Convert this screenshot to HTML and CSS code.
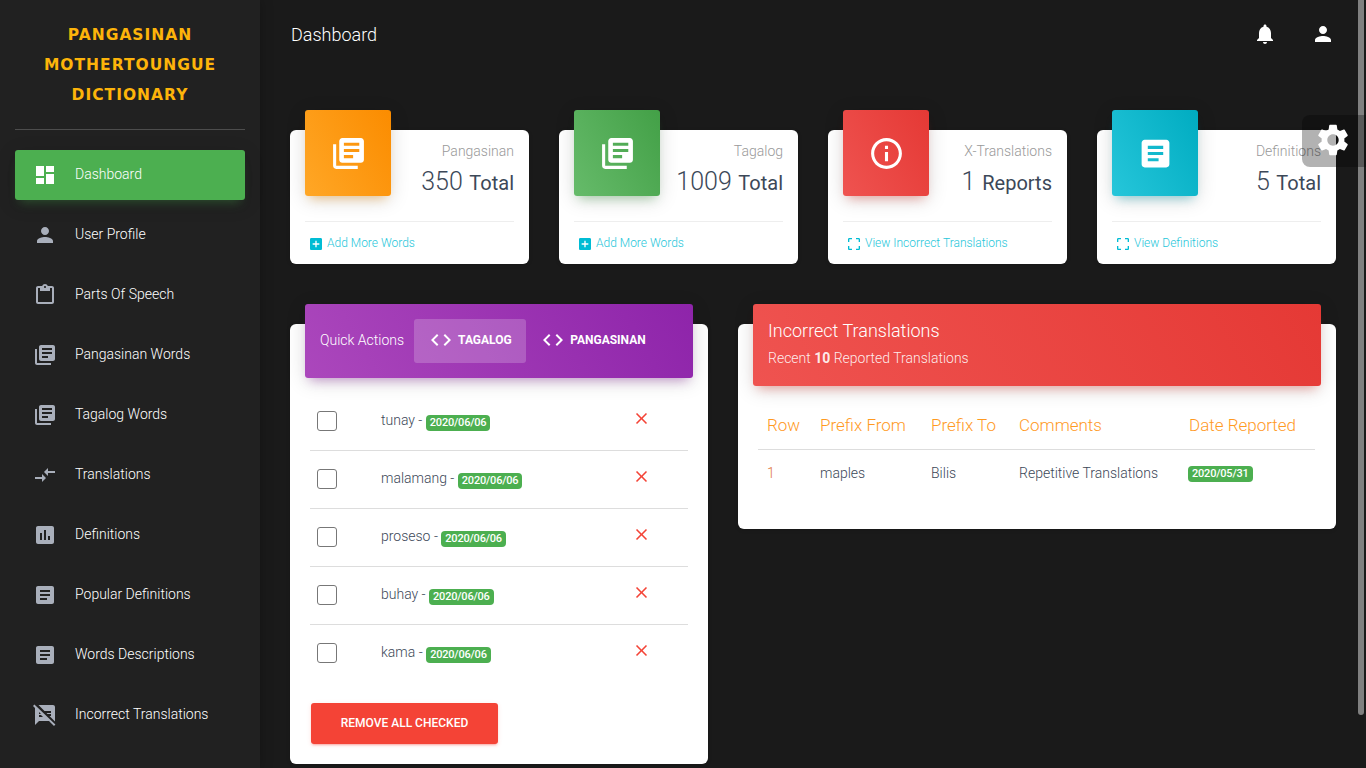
FILE: index.html
```html
<!DOCTYPE html>
<html lang="en">
<head>
<meta charset="utf-8">
<title>Dashboard</title>
<link rel="stylesheet" href="styles.css">
</head>
<body>
<svg class="defs" width="0" height="0" aria-hidden="true">
  <symbol id="i-dash" viewBox="0 0 24 24"><path d="M3 13h8V3H3v10zm0 8h8v-6H3v6zm10 0h8V11h-8v10zm0-18v6h8V3h-8z"/></symbol>
  <symbol id="i-person" viewBox="0 0 24 24"><path d="M12 12c2.21 0 4-1.79 4-4s-1.79-4-4-4-4 1.79-4 4 1.79 4 4 4zm0 2c-2.67 0-8 1.34-8 4v2h16v-2c0-2.66-5.33-4-8-4z"/></symbol>
  <symbol id="i-clip" viewBox="0 0 24 24"><path d="M19 3h-4.18C14.4 1.84 13.3 1 12 1c-1.3 0-2.4.84-2.82 2H5c-1.1 0-2 .9-2 2v14c0 1.1.9 2 2 2h14c1.1 0 2-.9 2-2V5c0-1.1-.9-2-2-2zm-7 0c.55 0 1 .45 1 1s-.45 1-1 1-1-.45-1-1 .45-1 1-1zm7 16H5V5h2v3h10V5h2v14z"/></symbol>
  <symbol id="i-lib" viewBox="0 0 24 24"><path d="M4 6H2v14c0 1.1.9 2 2 2h14v-2H4V6zm16-4H8c-1.1 0-2 .9-2 2v12c0 1.1.9 2 2 2h12c1.1 0 2-.9 2-2V4c0-1.1-.9-2-2-2zm-1 9H9V9h10v2zm-4 4H9v-2h6v2zm4-8H9V5h10v2z"/></symbol>
  <symbol id="i-compare" viewBox="0 0 24 24"><path d="M9.01 14H2v2h7.01v3L13 15l-3.99-4v3zm5.98-1v-3H22V8h-7.01V5L11 9l3.99 4z"/></symbol>
  <symbol id="i-chart" viewBox="0 0 24 24"><path d="M19 3H5c-1.1 0-2 .9-2 2v14c0 1.1.9 2 2 2h14c1.1 0 2-.9 2-2V5c0-1.1-.9-2-2-2zM9 17H7v-7h2v7zm4 0h-2V7h2v10zm4 0h-2v-4h2v4z"/></symbol>
  <symbol id="i-article" viewBox="0 0 24 24"><path d="M19 3H5c-1.1 0-2 .9-2 2v14c0 1.1.9 2 2 2h14c1.1 0 2-.9 2-2V5c0-1.1-.9-2-2-2zm-5 14H7v-2h7v2zm3-4H7v-2h10v2zm0-4H7V7h10v2z"/></symbol>
  <symbol id="i-speaker-off" viewBox="0 0 24 24"><path d="M21.99 4c0-1.1-.89-2-1.99-2H5.5l6 6H18v2h-4.5l1 1H18v2h-1.5l5.5 5.5V4zM1.4 1.6 0 3l2 2v17l4-4h10l5 5 1.4-1.4L1.4 1.6zM6 14v-2h2l2 2H6zm0-3V9l2 2H6z"/></symbol>
  <symbol id="i-info" viewBox="0 0 24 24"><path d="M11 7h2v2h-2zm0 4h2v6h-2zm1-9C6.48 2 2 6.48 2 12s4.48 10 10 10 10-4.48 10-10S17.52 2 12 2zm0 18c-4.41 0-8-3.59-8-8s3.59-8 8-8 8 3.59 8 8-3.59 8-8 8z"/></symbol>
  <symbol id="i-addbox" viewBox="0 0 24 24"><path d="M19 3H5a2 2 0 0 0-2 2v14c0 1.1.9 2 2 2h14c1.1 0 2-.9 2-2V5c0-1.1-.9-2-2-2zm-2 10h-4v4h-2v-4H7v-2h4V7h2v4h4v2z"/></symbol>
  <symbol id="i-full" viewBox="0 0 24 24"><path d="M3 5v4h2V5h4V3H5c-1.1 0-2 .9-2 2zm2 10H3v4c0 1.1.9 2 2 2h4v-2H5v-4zm14 4h-4v2h4c1.1 0 2-.9 2-2v-4h-2v4zm0-16h-4v2h4v4h2V5c0-1.1-.9-2-2-2z"/></symbol>
  <symbol id="i-code" viewBox="0 0 24 24"><path d="M9.4 16.6 4.8 12l4.6-4.6L8 6l-6 6 6 6 1.4-1.4zm5.2 0 4.6-4.6-4.6-4.6L16 6l6 6-6 6-1.4-1.4z"/></symbol>
  <symbol id="i-close" viewBox="0 0 24 24"><path d="M19 6.41 17.59 5 12 10.59 6.41 5 5 6.41 10.59 12 5 17.59 6.41 19 12 13.41 17.59 19 19 17.59 13.41 12z"/></symbol>
  <symbol id="i-bell" viewBox="0 0 24 24"><path d="M12 22c1.1 0 2-.9 2-2h-4c0 1.1.9 2 2 2zm6-6v-5c0-3.07-1.63-5.64-4.5-6.32V4c0-.83-.67-1.5-1.5-1.5s-1.5.67-1.5 1.5v.68C7.64 5.36 6 7.92 6 11v5l-2 2v1h16v-1l-2-2z"/></symbol>
  <symbol id="i-gear" viewBox="0 0 24 24"><path d="M19.14 12.94c.04-.3.06-.61.06-.94 0-.32-.02-.64-.07-.94l2.03-1.58a.49.49 0 0 0 .12-.61l-1.92-3.32a.488.488 0 0 0-.59-.22l-2.39.96c-.5-.38-1.03-.7-1.62-.94l-.36-2.54a.484.484 0 0 0-.48-.41h-3.84c-.24 0-.43.17-.47.41l-.36 2.54c-.59.24-1.13.57-1.62.94l-2.39-.96c-.22-.08-.47 0-.59.22L2.74 8.87c-.12.21-.08.47.12.61l2.03 1.58c-.05.3-.09.63-.09.94s.02.64.07.94l-2.03 1.58a.49.49 0 0 0-.12.61l1.92 3.32c.12.22.37.29.59.22l2.39-.96c.5.38 1.03.7 1.62.94l.36 2.54c.05.24.24.41.48.41h3.84c.24 0 .44-.17.47-.41l.36-2.54c.59-.24 1.13-.56 1.62-.94l2.39.96c.22.08.47 0 .59-.22l1.92-3.32c.12-.22.07-.47-.12-.61l-2.01-1.58zM12 15.6c-1.98 0-3.6-1.62-3.6-3.6s1.62-3.6 3.6-3.6 3.6 1.62 3.6 3.6-1.62 3.6-3.6 3.6z"/></symbol>
</svg>

<div class="layout">
  <aside class="sidebar">
    <div class="brand">PANGASINAN<br>MOTHERTOUNGUE<br>DICTIONARY</div>
    <nav class="nav">
      <a class="nav-item active"><svg class="nav-icon"><use href="#i-dash"/></svg><span>Dashboard</span></a>
      <a class="nav-item"><svg class="nav-icon"><use href="#i-person"/></svg><span>User Profile</span></a>
      <a class="nav-item"><svg class="nav-icon"><use href="#i-clip"/></svg><span>Parts Of Speech</span></a>
      <a class="nav-item"><svg class="nav-icon"><use href="#i-lib"/></svg><span>Pangasinan Words</span></a>
      <a class="nav-item"><svg class="nav-icon"><use href="#i-lib"/></svg><span>Tagalog Words</span></a>
      <a class="nav-item"><svg class="nav-icon"><use href="#i-compare"/></svg><span>Translations</span></a>
      <a class="nav-item"><svg class="nav-icon"><use href="#i-chart"/></svg><span>Definitions</span></a>
      <a class="nav-item"><svg class="nav-icon"><use href="#i-article"/></svg><span>Popular Definitions</span></a>
      <a class="nav-item"><svg class="nav-icon"><use href="#i-article"/></svg><span>Words Descriptions</span></a>
      <a class="nav-item"><svg class="nav-icon"><use href="#i-speaker-off"/></svg><span>Incorrect Translations</span></a>
    </nav>
  </aside>

  <main class="main">
    <header class="topbar">
      <div class="page-title">Dashboard</div>
      <div class="top-actions">
        <svg class="top-icon"><use href="#i-bell"/></svg>
        <svg class="top-icon"><use href="#i-person"/></svg>
      </div>
    </header>

    <section class="stats">
      <article class="stat">
        <div class="stat-head">
          <div class="stat-icon orange"><svg><use href="#i-lib"/></svg></div>
          <div class="stat-text"><p class="stat-cat">Pangasinan</p><h3 class="stat-val"><small>350</small> Total</h3></div>
        </div>
        <div class="stat-foot"><svg class="foot-icon"><use href="#i-addbox"/></svg><a>Add More Words</a></div>
      </article>
      <article class="stat">
        <div class="stat-head">
          <div class="stat-icon green"><svg><use href="#i-lib"/></svg></div>
          <div class="stat-text"><p class="stat-cat">Tagalog</p><h3 class="stat-val"><small>1009</small> Total</h3></div>
        </div>
        <div class="stat-foot"><svg class="foot-icon"><use href="#i-addbox"/></svg><a>Add More Words</a></div>
      </article>
      <article class="stat">
        <div class="stat-head">
          <div class="stat-icon red"><svg><use href="#i-info"/></svg></div>
          <div class="stat-text"><p class="stat-cat">X-Translations</p><h3 class="stat-val"><small>1</small> Reports</h3></div>
        </div>
        <div class="stat-foot"><svg class="foot-icon"><use href="#i-full"/></svg><a>View Incorrect Translations</a></div>
      </article>
      <article class="stat">
        <div class="stat-head">
          <div class="stat-icon cyan"><svg><use href="#i-article"/></svg></div>
          <div class="stat-text"><p class="stat-cat">Definitions</p><h3 class="stat-val"><small>5</small> Total</h3></div>
        </div>
        <div class="stat-foot"><svg class="foot-icon"><use href="#i-full"/></svg><a>View Definitions</a></div>
      </article>
    </section>

    <section class="panels">
      <article class="panel panel-tasks">
        <div class="panel-head purple tabs">
          <span class="tabs-title">Quick Actions</span>
          <a class="tab current"><svg><use href="#i-code"/></svg>TAGALOG</a>
          <a class="tab"><svg><use href="#i-code"/></svg>PANGASINAN</a>
        </div>
        <ul class="tasks">
          <li class="task"><span class="check"></span><span class="task-text">tunay - <b class="badge">2020/06/06</b></span><svg class="x"><use href="#i-close"/></svg></li>
          <li class="task"><span class="check"></span><span class="task-text">malamang - <b class="badge">2020/06/06</b></span><svg class="x"><use href="#i-close"/></svg></li>
          <li class="task"><span class="check"></span><span class="task-text">proseso - <b class="badge">2020/06/06</b></span><svg class="x"><use href="#i-close"/></svg></li>
          <li class="task"><span class="check"></span><span class="task-text">buhay - <b class="badge">2020/06/06</b></span><svg class="x"><use href="#i-close"/></svg></li>
          <li class="task"><span class="check"></span><span class="task-text">kama - <b class="badge">2020/06/06</b></span><svg class="x"><use href="#i-close"/></svg></li>
        </ul>
        <button class="remove"><span>REMOVE ALL CHECKED</span></button>
      </article>

      <article class="panel panel-table">
        <div class="panel-head red-head">
          <h4>Incorrect Translations</h4>
          <p>Recent <b>10</b> Reported Translations</p>
        </div>
        <table class="table">
          <thead>
            <tr><th>Row</th><th>Prefix From</th><th>Prefix To</th><th>Comments</th><th>Date Reported</th></tr>
          </thead>
          <tbody>
            <tr><td class="num">1</td><td>maples</td><td>Bilis</td><td>Repetitive Translations</td><td><b class="badge small">2020/05/31</b></td></tr>
          </tbody>
        </table>
      </article>
    </section>
  </main>
</div>

<div class="scrollbar"></div>
<div class="fixed-plugin"><svg><use href="#i-gear"/></svg></div>
</body>
</html>
```
FILE: styles.css
```css
* { box-sizing: border-box; }
html, body { margin: 0; height: 768px; overflow: hidden; }
body { background: #1a1a1a; font-family: Roboto, "Liberation Sans", sans-serif; font-weight: 300; color: #3c4858; position: relative; }
.defs { position: absolute; }
.layout { display: flex; height: 768px; }

.sidebar { width: 260px; flex: none; background: #212121; box-shadow: 0 0 12px rgba(0,0,0,.25); padding: 0 15px; }
.brand { height: 130px; padding-top: 20px; border-bottom: 1px solid rgba(180,180,180,.3); text-align: center; color: #fdb40a; font-family: "DejaVu Sans", sans-serif; font-weight: 700; font-size: 15.5px; line-height: 30px; letter-spacing: 1px; white-space: nowrap; }
.nav { display: flex; flex-direction: column; gap: 10px; margin-top: 20px; }
.nav-item { display: flex; align-items: center; height: 50px; padding-left: 18px; border-radius: 3px; color: #fff; font-size: 14px; font-weight: 300; }
.nav-item span { padding-bottom: 2px; }
.nav-item.active { background: #4caf50; color: #fff; box-shadow: 0 4px 20px rgba(0,0,0,.14), 0 7px 10px -5px rgba(76,175,80,.4); }
.nav-icon { width: 24px; height: 24px; margin-right: 18px; fill: #a9afbb; flex: none; }
.active .nav-icon { fill: #fff; }

.main { flex: 1; min-width: 0; padding: 0 30px; }
.topbar { display: flex; justify-content: space-between; align-items: center; height: 68px; padding: 0 1px; }
.page-title { font-size: 18px; font-weight: 300; color: #fff; }
.top-actions { display: flex; gap: 34px; }
.top-icon { width: 24px; height: 24px; fill: #fff; }

.stats { display: grid; grid-template-columns: repeat(4, 239px); gap: 30px; margin-top: 62px; }
.stat { position: relative; height: 134px; background: #fff; border-radius: 6px; box-shadow: 0 1px 4px rgba(0,0,0,.14); padding: 0 15px; }
.stat-head { display: flex; justify-content: space-between; height: 91px; }
.stat-icon { width: 86px; height: 86px; flex: none; margin-top: -20px; border-radius: 3px; display: flex; align-items: center; justify-content: center; }
.stat-icon svg { width: 37px; height: 37px; fill: #fff; }
.orange { background: linear-gradient(60deg, #ffa726, #fb8c00); box-shadow: 0 4px 20px rgba(0,0,0,.14), 0 7px 10px -5px rgba(255,152,0,.4); }
.green { background: linear-gradient(60deg, #66bb6a, #43a047); box-shadow: 0 4px 20px rgba(0,0,0,.14), 0 7px 10px -5px rgba(76,175,80,.4); }
.red { background: linear-gradient(60deg, #ef5350, #e53935); box-shadow: 0 4px 20px rgba(0,0,0,.14), 0 7px 10px -5px rgba(244,67,54,.4); }
.cyan { background: linear-gradient(60deg, #26c6da, #00acc1); box-shadow: 0 4px 20px rgba(0,0,0,.14), 0 7px 10px -5px rgba(0,172,193,.4); }
.stat-text { text-align: right; padding-top: 12px; }
.stat-cat { margin: 0; font-size: 14px; line-height: 18px; color: #999; }
.stat-val { margin: 8px 0 0; font-size: 20px; line-height: 28px; font-weight: 400; color: #3c4858; }
.stat-val small { font-size: 25px; font-weight: 300; margin-right: 2px; }
.stat-foot { display: flex; align-items: center; height: 43px; border-top: 1px solid #eee; font-size: 12px; color: #00bcd4; padding-left: 3px; }
.foot-icon { width: 16px; height: 16px; fill: #00bcd4; margin-right: 3px; margin-top: 2px; flex: none; }
.stat-foot a { color: #26c6da; }

.panels { display: flex; justify-content: space-between; align-items: flex-start; margin-top: 60px; }
.panel { background: #fff; border-radius: 6px; box-shadow: 0 1px 4px rgba(0,0,0,.14); padding: 0 15px; }
.panel-tasks { width: 418px; height: 440px; }
.panel-table { width: 598px; height: 205px; }
.panel-head { margin-top: -20px; border-radius: 3px; color: #fff; position: relative; }
.purple { background: linear-gradient(60deg, #ab47bc, #8e24aa); box-shadow: 0 4px 20px rgba(0,0,0,.14), 0 7px 10px -5px rgba(156,39,176,.4); }
.tabs { display: flex; align-items: center; height: 74px; padding-left: 15px; }
.tabs-title { font-size: 14px; color: #fff; margin-right: 10px; line-height: 20px; padding-bottom: 2px; }
.tab { display: flex; align-items: center; gap: 5px; height: 44px; padding: 0 14.5px 2px 15px; border-radius: 3px; font-size: 12px; font-weight: 700; color: #fff; }
.tab svg { width: 24px; height: 24px; fill: #fff; }
.tab.current { background: rgba(255,255,255,.2); }

.tasks { list-style: none; margin: 14px 5px 0; padding: 0; }
.task { display: flex; height: 58px; border-top: 1px solid #ddd; padding-left: 7px; position: relative; }
.task:first-child { border-top: 0; }
.check { width: 20px; height: 20px; border: 1px solid #777; border-radius: 3px; margin-top: 18px; flex: none; }
.task:first-child .check { margin-top: 19px; }
.task-text { margin-left: 44px; margin-top: 17px; font-size: 14px; line-height: 20px; color: #3c4858; width: 250.5px; flex: none; }
.task:first-child .task-text { margin-top: 18px; }
.badge { display: inline-block; vertical-align: -1px; background: #4caf50; color: #fff; font-size: 11px; font-weight: 500; line-height: 16px; padding: 0 4px; border-radius: 4px; letter-spacing: -.2px; }
.x { width: 19px; height: 19px; fill: #f44336; margin-top: 16px; flex: none; }
.task:first-child .x { margin-top: 17px; }
.remove { display: block; margin: 21px 0 0 6px; width: 187px; height: 41px; padding: 0 0 2px; border: 0; border-radius: 3px; background: #f44336; color: #fff; font-family: inherit; font-size: 12px; font-weight: 500; box-shadow: 0 2px 2px 0 rgba(244,67,54,.14), 0 3px 1px -2px rgba(244,67,54,.2), 0 1px 5px 0 rgba(244,67,54,.12); }

.red-head { height: 82px; padding: 15px; background: linear-gradient(60deg, #ef5350, #e53935); box-shadow: 0 4px 20px rgba(0,0,0,.14), 0 7px 10px -5px rgba(244,67,54,.4); }
.red-head h4 { margin: 0; font-size: 18px; font-weight: 300; line-height: 24px; }
.red-head p { margin: 5px 0 0; font-size: 14px; line-height: 20px; color: rgba(255,255,255,.9); }
.red-head b { font-weight: 700; }
.table { width: 557px; margin: 20px 0 0 5px; border-collapse: collapse; table-layout: fixed; }
.table th { text-align: left; font-size: 17px; font-weight: 300; color: #ff9a1f; height: 43px; padding: 0 0 4px 9px; border-bottom: 1px solid #ddd; }
.table td { font-size: 14px; height: 47px; padding: 0 0 0 9px; color: #3c4858; }
.table th:nth-child(1) { width: 53px; }
.table th:nth-child(2) { width: 111px; }
.table th:nth-child(3) { width: 88px; }
.table th:nth-child(4) { width: 170px; }
.table td.num { color: #e0763a; }
.badge.small { margin-left: -1px; }

.scrollbar { position: absolute; right: 2px; top: 0; width: 6px; height: 715px; background: #808080; border-radius: 0 0 3px 3px; }
.fixed-plugin { position: absolute; right: 0; top: 115px; width: 64px; height: 52px; background: rgba(0,0,0,.3); border-radius: 8px 0 0 8px; }
.fixed-plugin svg { position: absolute; left: 12px; top: 6px; width: 38px; height: 38px; fill: #fff; }
```
